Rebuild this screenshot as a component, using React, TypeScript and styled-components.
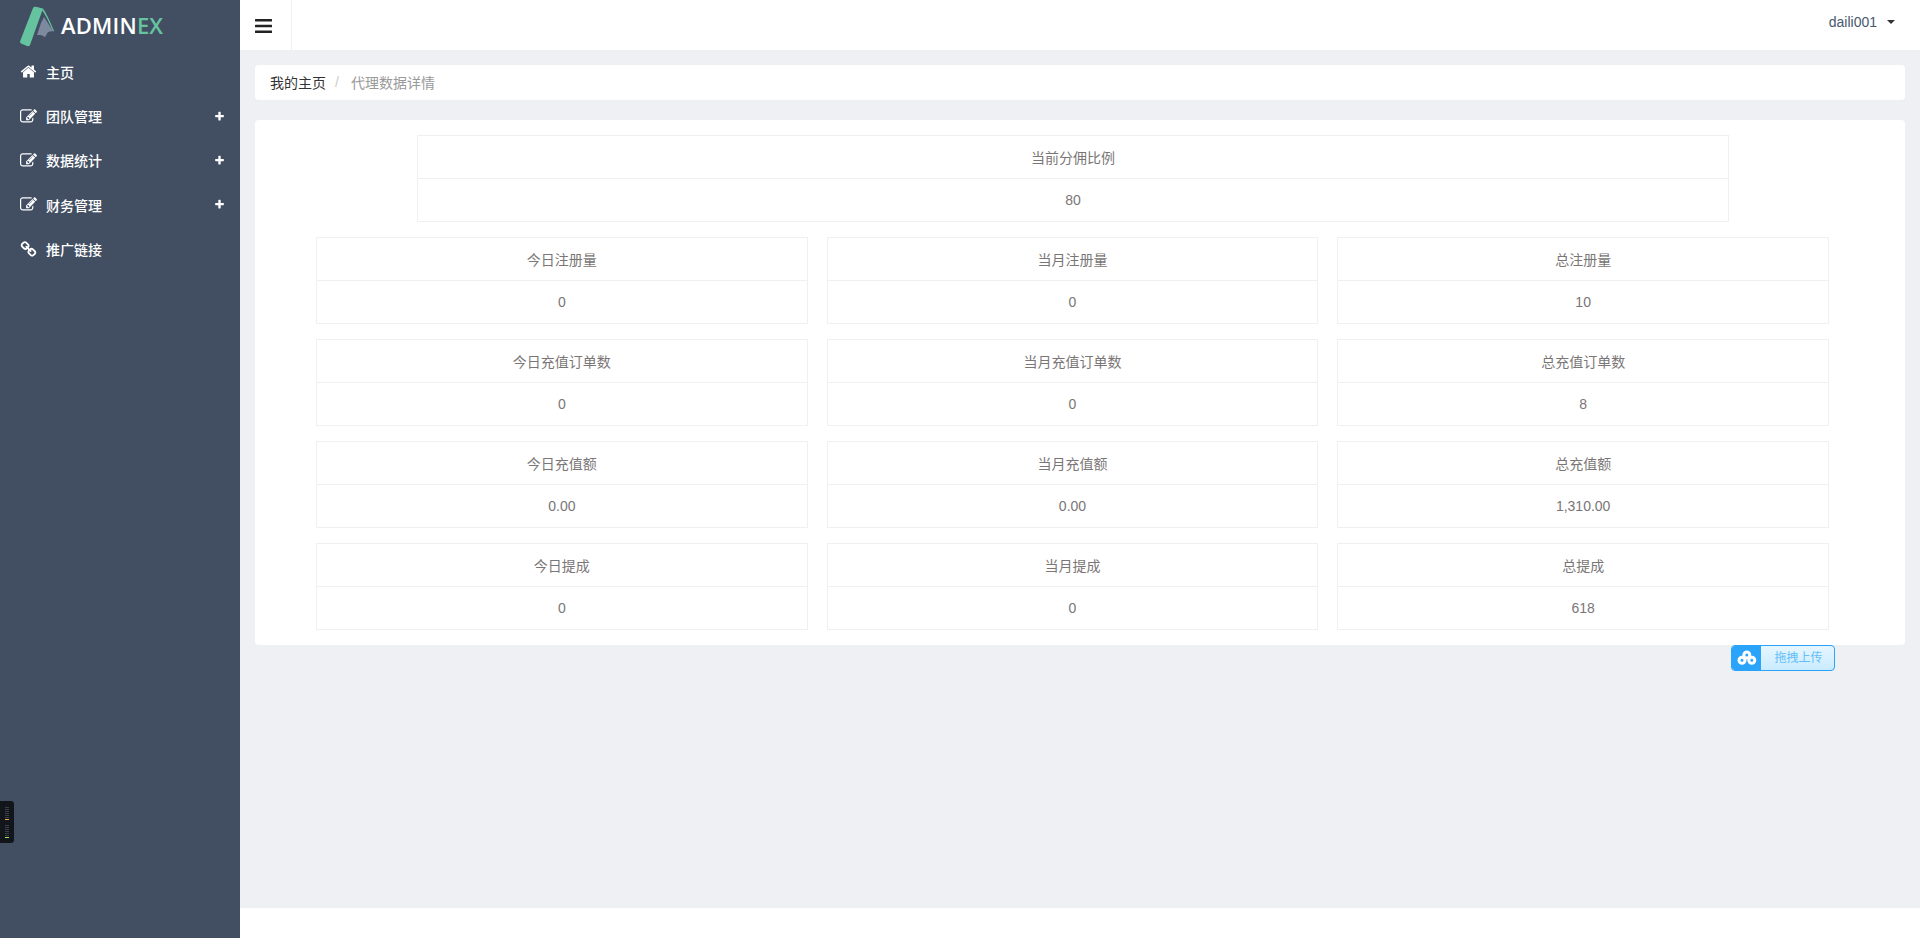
import { FC } from 'react'
import styled, { createGlobalStyle } from 'styled-components'

const GlobalStyle = createGlobalStyle`
    html, body { margin: 0; padding: 0; }
    body {
        font-family: "Liberation Sans", "Noto Sans CJK SC", sans-serif;
        font-size: 14px;
        color: #7a7676;
        background: #eff0f4;
    }
    * { box-sizing: border-box; }
`

type Stat = { title: string; value: string }

const statRows: Stat[][] = [
    [
        { title: '今日注册量', value: '0' },
        { title: '当月注册量', value: '0' },
        { title: '总注册量', value: '10' },
    ],
    [
        { title: '今日充值订单数', value: '0' },
        { title: '当月充值订单数', value: '0' },
        { title: '总充值订单数', value: '8' },
    ],
    [
        { title: '今日充值额', value: '0.00' },
        { title: '当月充值额', value: '0.00' },
        { title: '总充值额', value: '1,310.00' },
    ],
    [
        { title: '今日提成', value: '0' },
        { title: '当月提成', value: '0' },
        { title: '总提成', value: '618' },
    ],
]

const homePath = 'M1472 992v480q0 26-19 45t-45 19h-384v-384h-256v384h-384q-26 0-45-19t-19-45v-480q0-1 .5-3t.5-3l575-474 575 474q1 2 1 6zm223-69l-62 74q-8 9-21 11h-3q-13 0-21-7l-692-577-692 577q-12 8-24 7-13-2-21-11l-62-74q-8-10-7-23.500t11-21.500l719-599q32-26 76-26t76 26l244 204v-195q0-14 9-23t23-9h192q14 0 23 9t9 23v408l219 182q10 8 11 21.500t-7 23.500z'
const editPath = 'M888 1184l116-116-152-152-116 116v56h96v96h56zm440-720q-16-16-33 1l-350 350q-17 17-1 33t33-1l350-350q17-17 1-33zm80 594v190q0 119-84.500 203.500t-203.500 84.500h-832q-119 0-203.500-84.500t-84.500-203.500v-832q0-119 84.500-203.500t203.500-84.500h832q63 0 117 25 15 7 18 23 3 17-9 29l-49 49q-14 14-32 8-23-6-45-6h-832q-66 0-113 47t-47 113v832q0 66 47 113t113 47h832q66 0 113-47t47-113v-126q0-13 9-22l64-64q15-15 35-7t20 29zm-96-738l288 288-672 672h-288v-288zm444 132l-92 92-288-288 92-92q28-28 68-28t68 28l152 152q28 28 28 68t-28 68z'
const linkPath = 'M1520 1216q0-40-28-68l-208-208q-28-28-68-28-42 0-72 32 3 3 19 18.500t21.500 21.500 15 19 13 25.500 3.500 27.500q0 40-28 68t-68 28q-15 0-27.500-3.500t-25.500-13-19-15-21.500-21.500-18.500-19q-33 31-33 73 0 40 28 68l206 207q27 27 68 27 40 0 68-26l147-146q28-28 28-67zm-703-705q0-40-28-68l-206-207q-28-28-68-28-39 0-68 27l-147 146q-28 28-28 67 0 40 28 68l208 208q27 27 68 27 42 0 72-31-3-3-19-18.500t-21.500-21.500-15-19-13-25.500-3.500-27.500q0-40 28-68t68-28q15 0 27.500 3.500t25.500 13 19 15 21.500 21.500 18.500 19q33-31 33-73zm895 705q0 120-85 203l-147 146q-83 83-203 83-121 0-204-85l-206-207q-83-83-83-203 0-123 88-209l-88-88q-86 88-208 88-120 0-204-84l-208-208q-84-84-84-204t85-203l147-146q83-83 203-83 121 0 204 85l206 207q83 83 83 203 0 123-88 209l88 88q86-88 208-88 120 0 204 84l208 208q84 84 84 204z'
const plusPath = 'M1600 736v192q0 40-28 68t-68 28h-416v416q0 40-28 68t-68 28h-192q-40 0-68-28t-28-68v-416h-416q-40 0-68-28t-28-68v-192q0-40 28-68t68-28h416v-416q0-40 28-68t68-28h192q40 0 68 28t28 68v416h416q40 0 68 28t28 68z'

const Fa4: FC<{ d: string; size: number }> = ({ d, size }) => (
    <svg width={size} height={size} viewBox="0 0 1792 1792" fill="currentColor">
        <path d={d} />
    </svg>
)

const LogoMark = () => (
    <svg width="40" height="46" viewBox="0 0 40 46">
        <path d="M0 39.5 L13 6 Q14 4 17 5 L23 6.5 L10 43 Q9 45 7 44 L1 41.5 Q0 41 0 39.5Z" fill="#65c3a0" />
        <path d="M23 6.5 Q27 12 34 29 L33 29.500 Q27 15 22 8Z" fill="#65c3a0" />
        <path d="M17 33 L21 21 L24 15 L33 29 L28 30 L25 35 L21 33Z" fill="#7d899e" />
    </svg>
)

const BarsIcon = () => (
    <svg width="17" height="14" viewBox="0 0 17 14" fill="#222">
        <rect y="0" width="17" height="2.6" rx="0.5" />
        <rect y="5.7" width="17" height="2.6" rx="0.5" />
        <rect y="11.4" width="17" height="2.6" rx="0.5" />
    </svg>
)

const CloudIcon = () => (
    <svg width="20" height="16" viewBox="0 0 20 16" fill="none" stroke="#fff" strokeWidth="3">
        <circle cx="9.800" cy="5" r="3" />
        <circle cx="5" cy="10.200" r="3" />
        <circle cx="14.800" cy="10.200" r="3" />
    </svg>
)

const menus = [
    { name: '主页', icon: homePath },
    { name: '团队管理', icon: editPath, sub: true },
    { name: '数据统计', icon: editPath, sub: true },
    { name: '财务管理', icon: editPath, sub: true },
    { name: '推广链接', icon: linkPath },
]

const StatTable: FC<Stat> = ({ title, value }) => (
    <Table>
        <tbody>
            <tr><Cell>{title}</Cell></tr>
            <tr><Cell>{value}</Cell></tr>
        </tbody>
    </Table>
)

const App: FC = () => {
    return (
        <Wrap>
            <GlobalStyle />
            <Sidebar>
                <Logo>
                    <LogoMark />
                    <LogoText>ADMIN<em>EX</em></LogoText>
                </Logo>
                {menus.map(m => (
                    <MenuItem key={m.name}>
                        <MenuIcon><Fa4 d={m.icon} size={17} /></MenuIcon>
                        <MenuName>{m.name}</MenuName>
                        {m.sub && <MenuPlus><Fa4 d={plusPath} size={11} /></MenuPlus>}
                    </MenuItem>
                ))}
            </Sidebar>
            <Main>
                <Header>
                    <Toggle><BarsIcon /></Toggle>
                    <User>daili001<Caret /></User>
                </Header>
                <Content>
                    <Breadcrumb>
                        <CrumbLink>我的主页</CrumbLink>
                        <CrumbSep>/</CrumbSep>
                        <CrumbActive>代理数据详情</CrumbActive>
                    </Breadcrumb>
                    <Panel>
                        <TopTable>
                            <StatTable title="当前分佣比例" value="80" />
                        </TopTable>
                        <StatGrid>
                            {statRows.flat().map(s => (
                                <StatTable key={s.title} title={s.title} value={s.value} />
                            ))}
                        </StatGrid>
                        <Upload>
                            <UploadIcon><CloudIcon /></UploadIcon>
                            <UploadText>拖拽上传</UploadText>
                        </Upload>
                    </Panel>
                </Content>
                <Footer />
            </Main>
            <Meter>
                <MeterGroup $color="#f5a83a" />
                <MeterGroup $color="#a5e84a" />
            </Meter>
        </Wrap>
    )
}

const Wrap = styled.div`
    display: flex;
    position: relative;
    min-height: 938px;
`
Wrap.displayName = "Wrap"

const Sidebar = styled.div`
    width: 240px;
    flex-shrink: 0;
    background: #424f63;
    color: #fff;
`
Sidebar.displayName = "Sidebar"

const Logo = styled.div`
    height: 49.5px;
    display: flex;
    align-items: center;
    padding-left: 20px;
`
Logo.displayName = "Logo"

const LogoText = styled.div`
    margin-left: 1px;
    font-family: "Open Sans", sans-serif;
    font-size: 22px;
    font-weight: 600;
    letter-spacing: 0.2px;
    color: #fff;
    em { font-style: normal; color: #65c3a0; }
`
LogoText.displayName = "LogoText"

const MenuItem = styled.div`
    height: 44.4px;
    display: flex;
    align-items: center;
    padding: 0 15px 0 20px;
`
MenuItem.displayName = "MenuItem"

const MenuIcon = styled.span`
    width: 26px;
    display: flex;
    align-items: center;
`
MenuIcon.displayName = "MenuIcon"

const MenuName = styled.span`
    flex: 1;
    font-size: 14px;
    font-weight: 500;
`
MenuName.displayName = "MenuName"

const MenuPlus = styled.span`
    display: flex;
`
MenuPlus.displayName = "MenuPlus"

const Main = styled.div`
    flex: 1;
    display: flex;
    flex-direction: column;
`
Main.displayName = "Main"

const Header = styled.div`
    height: 50px;
    background: #fff;
    display: flex;
    align-items: center;
    justify-content: space-between;
`
Header.displayName = "Header"

const Toggle = styled.div`
    width: 52px;
    height: 50px;
    padding: 2px 0 0 15px;
    display: flex;
    align-items: center;
    border-right: 1px solid #eff0f4;
`
Toggle.displayName = "Toggle"

const User = styled.div`
    display: flex;
    align-items: center;
    padding-right: 25px;
    margin-top: -6px;
    color: #49586e;
`
User.displayName = "User"

const Caret = styled.span`
    margin-left: 10px;
    border-top: 4px solid #333;
    border-left: 4px solid transparent;
    border-right: 4px solid transparent;
`
Caret.displayName = "Caret"

const Content = styled.div`
    flex: 1;
    padding: 15px;
`
Content.displayName = "Content"

const Breadcrumb = styled.div`
    height: 35px;
    background: #fff;
    border-radius: 4px;
    padding: 0 15px 2px;
    display: flex;
    align-items: center;
    margin-bottom: 20px;
`
Breadcrumb.displayName = "Breadcrumb"

const CrumbLink = styled.span`
    color: #333;
`
CrumbLink.displayName = "CrumbLink"

const CrumbSep = styled.span`
    color: #ccc;
    padding: 0 12px 0 9px;
`
CrumbSep.displayName = "CrumbSep"

const CrumbActive = styled.span`
    color: #999;
`
CrumbActive.displayName = "CrumbActive"

const Panel = styled.div`
    position: relative;
    background: #fff;
    border-radius: 4px;
    padding: 15px 76px 15px 61px;
`
Panel.displayName = "Panel"

const TopTable = styled.div`
    margin: 0 100px 15px 101px;
`
TopTable.displayName = "TopTable"

const StatGrid = styled.div`
    display: grid;
    grid-template-columns: repeat(3, 1fr);
    gap: 15px 19px;
`
StatGrid.displayName = "StatGrid"

const Table = styled.table`
    width: 100%;
    border-collapse: collapse;
`
Table.displayName = "Table"

const Cell = styled.td`
    height: 43px;
    padding: 0;
    border: 1px solid #eff0f4;
    text-align: center;
    color: #7a7676;
`
Cell.displayName = "Cell"

const Upload = styled.div`
    position: absolute;
    top: 100%;
    right: 70px;
    width: 104px;
    height: 26px;
    display: flex;
    border: 1px solid #2aa3fb;
    border-radius: 4px;
    overflow: hidden;
    background: linear-gradient(#e6f6ff, #c9ebff);
`
Upload.displayName = "Upload"

const UploadIcon = styled.div`
    width: 29px;
    background: #2aa3fb;
    display: flex;
    align-items: center;
    justify-content: center;
`
UploadIcon.displayName = "UploadIcon"

const UploadText = styled.div`
    flex: 1;
    padding-left: 2px;
    font-size: 12px;
    line-height: 24px;
    text-align: center;
    color: #62bdf8;
`
UploadText.displayName = "UploadText"

const Footer = styled.div`
    height: 30px;
    background: #fff;
`
Footer.displayName = "Footer"

const Meter = styled.div`
    position: absolute;
    left: 0;
    top: 801px;
    width: 14px;
    height: 42px;
    background: #12161a;
    border-radius: 0 3px 3px 0;
    display: flex;
    flex-direction: column;
    align-items: center;
    justify-content: center;
    gap: 5px;
`
Meter.displayName = "Meter"

const MeterGroup = styled.div<{ $color: string }>`
    width: 4px;
    height: 13px;
    background: repeating-linear-gradient(#3a3f45 0 1px, transparent 1px 2px);
    border-bottom: 1px solid ${p => p.$color};
`
MeterGroup.displayName = "MeterGroup"

export default App
